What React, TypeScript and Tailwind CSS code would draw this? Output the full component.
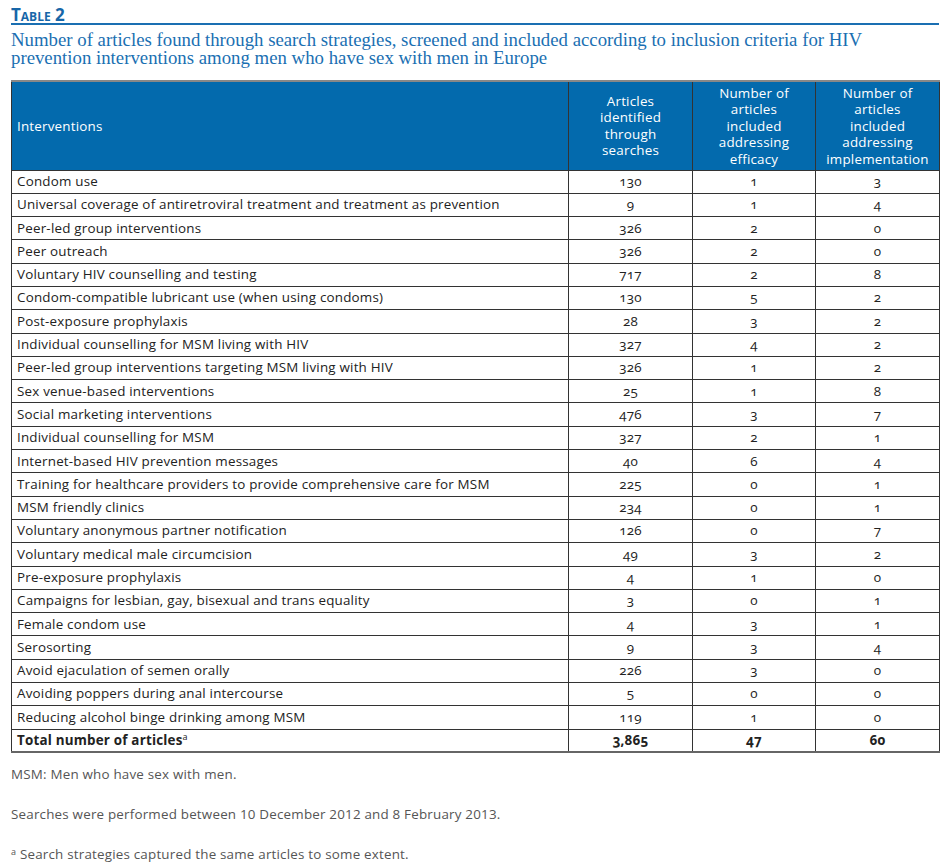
const rows: [string, string, string, string][] = [
  ["Condom use", "130", "1", "3"],
  ["Universal coverage of antiretroviral treatment and treatment as prevention", "9", "1", "4"],
  ["Peer-led group interventions", "326", "2", "0"],
  ["Peer outreach", "326", "2", "0"],
  ["Voluntary HIV counselling and testing", "717", "2", "8"],
  ["Condom-compatible lubricant use (when using condoms)", "130", "5", "2"],
  ["Post-exposure prophylaxis", "28", "3", "2"],
  ["Individual counselling for MSM living with HIV", "327", "4", "2"],
  ["Peer-led group interventions targeting MSM living with HIV", "326", "1", "2"],
  ["Sex venue-based interventions", "25", "1", "8"],
  ["Social marketing interventions", "476", "3", "7"],
  ["Individual counselling for MSM", "327", "2", "1"],
  ["Internet-based HIV prevention messages", "40", "6", "4"],
  ["Training for healthcare providers to provide comprehensive care for MSM", "225", "0", "1"],
  ["MSM friendly clinics", "234", "0", "1"],
  ["Voluntary anonymous partner notification", "126", "0", "7"],
  ["Voluntary medical male circumcision", "49", "3", "2"],
  ["Pre-exposure prophylaxis", "4", "1", "0"],
  ["Campaigns for lesbian, gay, bisexual and trans equality", "3", "0", "1"],
  ["Female condom use", "4", "3", "1"],
  ["Serosorting", "9", "3", "4"],
  ["Avoid ejaculation of semen orally", "226", "3", "0"],
  ["Avoiding poppers during anal intercourse", "5", "0", "0"],
  ["Reducing alcohol binge drinking among MSM", "119", "1", "0"],
];

const cell = "border border-[#333] h-[23.3px] p-0 leading-none";
const num = "text-center [font-variant-numeric:oldstyle-nums]";

export default function App() {
  return (
    <div className="w-[950px] bg-white px-[11px] pt-[7px] font-['Open_Sans',sans-serif] text-[#222]">
      <div className="border-b-2 border-[#1a6fb2] leading-[16px]">
        <span className="text-[17px] font-bold text-[#1766a8] [font-variant:small-caps]">Table 2</span>
      </div>
      <p className="mt-[6px] font-['Liberation_Serif',serif] text-[18.8px] leading-[18px] text-[#1a6fb2]">
        Number of articles found through search strategies, screened and included according to inclusion criteria for HIV
        <br />
        prevention interventions among men who have sex with men in Europe
      </p>

      <table className="mt-[13px] w-[928px] table-fixed border-collapse border-t-2 border-t-[#888] text-[13.4px] tracking-[0.2px]">
        <colgroup>
          <col className="w-[557px]" />
          <col className="w-[124px]" />
          <col className="w-[123px]" />
          <col className="w-[124px]" />
        </colgroup>
        <thead>
          <tr className="h-[89px] bg-[#036aad] text-white leading-[16.5px]">
            <th className="border border-[#333] px-[5px] text-left font-normal">Interventions</th>
            <th className="border border-[#333] px-[4px] text-center font-normal">
              Articles
              <br />
              identified
              <br />
              through
              <br />
              searches
            </th>
            <th className="border border-[#333] px-[4px] text-center font-normal">
              Number of
              <br />
              articles
              <br />
              included
              <br />
              addressing
              <br />
              efficacy
            </th>
            <th className="border border-[#333] px-[1px] text-center font-normal">
              Number of
              <br />
              articles
              <br />
              included
              <br />
              addressing
              <br />
              implementation
            </th>
          </tr>
        </thead>
        <tbody>
          {rows.map((r) => (
            <tr key={r[0]}>
              <td className={`${cell} px-[5px]`}>{r[0]}</td>
              <td className={`${cell} ${num}`}>{r[1]}</td>
              <td className={`${cell} ${num}`}>{r[2]}</td>
              <td className={`${cell} ${num}`}>{r[3]}</td>
            </tr>
          ))}
          <tr className="font-bold">
            <td className={`${cell} px-[5px] border-b-2 border-b-[#666]`}>
              Total number of articles<sup className="text-[9px] font-normal">a</sup>
            </td>
            <td className={`${cell} ${num} border-b-2 border-b-[#666]`}>3,865</td>
            <td className={`${cell} ${num} border-b-2 border-b-[#666]`}>47</td>
            <td className={`${cell} ${num} border-b-2 border-b-[#666]`}>60</td>
          </tr>
        </tbody>
      </table>

      <div className="mt-[13px] space-y-[23px] pb-[6px] text-[13.4px] leading-[17px] tracking-[0.2px] text-[#555]">
        <p>MSM: Men who have sex with men.</p>
        <p>Searches were performed between 10 December 2012 and 8 February 2013.</p>
        <p>
          <sup className="text-[9px]">a</sup> Search strategies captured the same articles to some extent.
        </p>
      </div>
    </div>
  );
}
